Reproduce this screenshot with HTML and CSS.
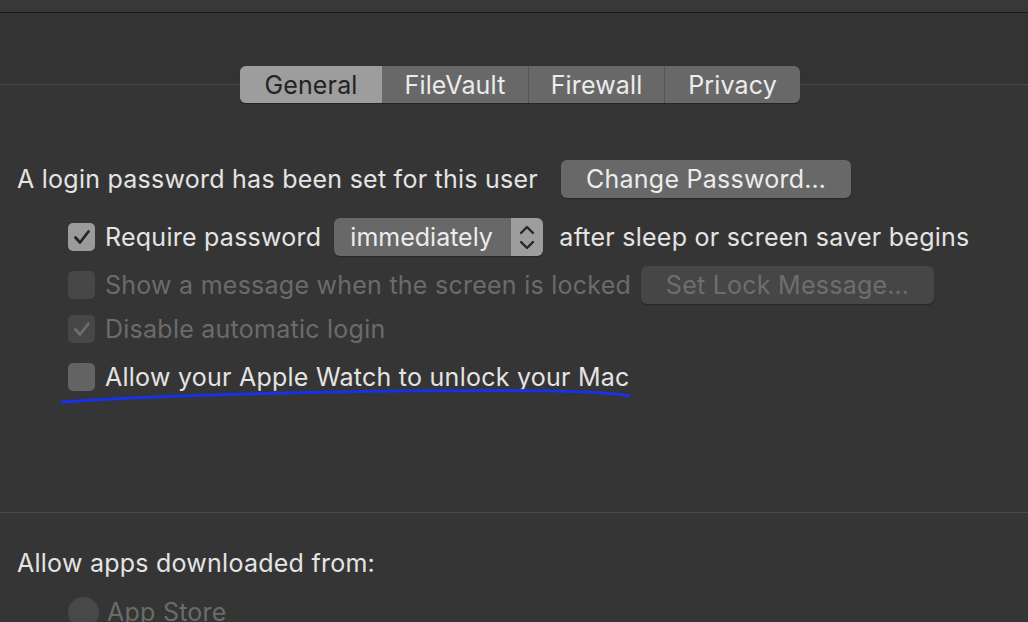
FILE: index.html
```html
<!DOCTYPE html>
<html>
<head>
<meta charset="utf-8">
<link rel="stylesheet" href="styles.css">
</head>
<body>
<div class="window">
  <div class="titlebar"></div>
  <div class="pane">
    <div class="tabs">
      <div class="tab tab-general active">General</div>
      <div class="tab tab-filevault">FileVault</div>
      <div class="tab tab-firewall">Firewall</div>
      <div class="tab tab-privacy">Privacy</div>
    </div>

    <div class="row row1">
      <span class="label">A login password has been set for this user</span>
      <button class="btn btn-change">Change Password…</button>
    </div>

    <div class="row row2 indent">
      <span class="check checked">
        <svg viewBox="0 0 27 28" width="27" height="28"><path d="M7.5 14.5 L12 19.5 L20.5 8.5" fill="none" stroke="#262626" stroke-width="2.8" stroke-linecap="round" stroke-linejoin="round"/></svg>
      </span>
      <span class="label">Require password</span>
      <div class="popup">
        <span class="popup-value">immediately</span>
        <span class="popup-stepper">
          <svg viewBox="0 0 32 38" width="32" height="38"><path d="M10 15 L16 9 L22 15 M10 24 L16 30 L22 24" fill="none" stroke="#262626" stroke-width="2.4" stroke-linecap="round" stroke-linejoin="round"/></svg>
        </span>
      </div>
      <span class="label">after sleep or screen saver begins</span>
    </div>

    <div class="row row3 indent">
      <span class="check disabled"></span>
      <span class="label dim">Show a message when the screen is locked</span>
      <button class="btn btn-lock">Set Lock Message…</button>
    </div>

    <div class="row row4 indent">
      <span class="check disabled">
        <svg viewBox="0 0 27 28" width="27" height="28"><path d="M7.5 14.5 L12 19.5 L20.5 8.5" fill="none" stroke="#6c6c6c" stroke-width="2.8" stroke-linecap="round" stroke-linejoin="round"/></svg>
      </span>
      <span class="label dim">Disable automatic login</span>
    </div>

    <div class="row row5 indent">
      <span class="check unchecked"></span>
      <span class="label">Allow your Apple Watch to unlock your Mac</span>
      <svg class="scribble" viewBox="0 0 580 20" width="580" height="20"><path d="M3 15 C 60 11, 150 7, 280 5 C 400 3, 500 3, 545 6 C 560 7, 566 8, 570 9" fill="none" stroke="#1631e6" stroke-width="3" stroke-linecap="round"/></svg>
    </div>

    <div class="section2">
      <div class="row row-heading">
        <span class="label">Allow apps downloaded from:</span>
      </div>
      <div class="row row-radio indent">
        <span class="radio"></span>
        <span class="label dim">App Store</span>
      </div>
    </div>
  </div>
</div>
</body>
</html>
```

FILE: styles.css
```css
html, body {
  margin: 0;
  padding: 0;
  height: 622px;
  overflow: hidden;
  background: #333333;
}

body {
  font-family: "Inter", "Liberation Sans", sans-serif;
  font-size: 25px;
  color: #e4e4e4;
}

.window {
  width: 1028px;
  height: 622px;
  overflow: hidden;
}

.titlebar {
  height: 12px;
  background: #383838;
  border-bottom: 1px solid #1b1b1b;
}

.pane {
  margin-top: 71px;
  border-top: 1px solid #484848;
  background: #353535;
  height: 600px;
}

.tabs {
  display: flex;
  width: 560px;
  height: 37px;
  margin: -19px 0 0 240px;
  border-radius: 6px;
  overflow: hidden;
  background: #686868;
  box-shadow: 0 1px 1px rgba(0,0,0,0.35);
}

.tab {
  display: flex;
  align-items: center;
  justify-content: center;
  height: 37px;
  color: #ececec;
  letter-spacing: 0.15px;
  box-sizing: border-box;
}

.tab + .tab {
  border-left: 1px solid #555555;
}

.tab-general { width: 142px; }
.tab-filevault { width: 146px; }
.tab-firewall { width: 136px; }
.tab-privacy { width: 136px; }

.tab.active {
  background: #9d9d9d;
  color: #232323;
}

.tab.active + .tab {
  border-left: none;
}

.row {
  display: flex;
  align-items: center;
  height: 38px;
  padding-left: 17px;
  position: relative;
}

.row.indent {
  padding-left: 68px;
}

.label {
  white-space: nowrap;
  letter-spacing: 0.25px;
}

.label.dim {
  color: #6b6b6b;
}

.row1 { margin-top: 57px; }
.row2 { margin-top: 20px; }
.row3 { margin-top: 10px; }
.row4 { margin-top: 6px; }
.row5 { margin-top: 10px; }

.btn {
  font-family: inherit;
  font-size: 25px;
  letter-spacing: 0.25px;
  border: none;
  border-radius: 6px;
  height: 38px;
  padding: 0;
  box-shadow: 0 1px 1px rgba(0,0,0,0.3);
}

.btn-change {
  width: 290px;
  margin-left: 23px;
  background: #686868;
  color: #ececec;
}

.btn-lock {
  width: 293px;
  margin-left: 10px;
  background: #464646;
  color: #6e6e6e;
}

.check {
  width: 27px;
  height: 28px;
  border-radius: 5px;
  margin-right: 10px;
  display: inline-flex;
  flex-shrink: 0;
}

.check.checked {
  background: #9b9b9b;
}

.check.disabled {
  background: #474747;
}

.check.unchecked {
  background: #636363;
}

.popup {
  display: flex;
  height: 38px;
  margin: 0 16px 0 13px;
  border-radius: 6px;
  overflow: hidden;
  box-shadow: 0 1px 1px rgba(0,0,0,0.3);
}

.popup-value {
  width: 177px;
  background: #686868;
  color: #ececec;
  display: flex;
  align-items: center;
  padding-left: 16px;
  box-sizing: border-box;
}

.popup-stepper {
  width: 32px;
  background: #9d9d9d;
  display: flex;
}

.scribble {
  position: absolute;
  left: 59px;
  top: 29px;
}

.section2 {
  margin-top: 116px;
  border-top: 1px solid #4b4b4b;
}

.row-heading {
  margin-top: 31px;
}

.row-radio {
  margin-top: 11px;
}

.radio {
  width: 31px;
  height: 31px;
  border-radius: 50%;
  background: #484848;
  margin-right: 8px;
  flex-shrink: 0;
}
```
